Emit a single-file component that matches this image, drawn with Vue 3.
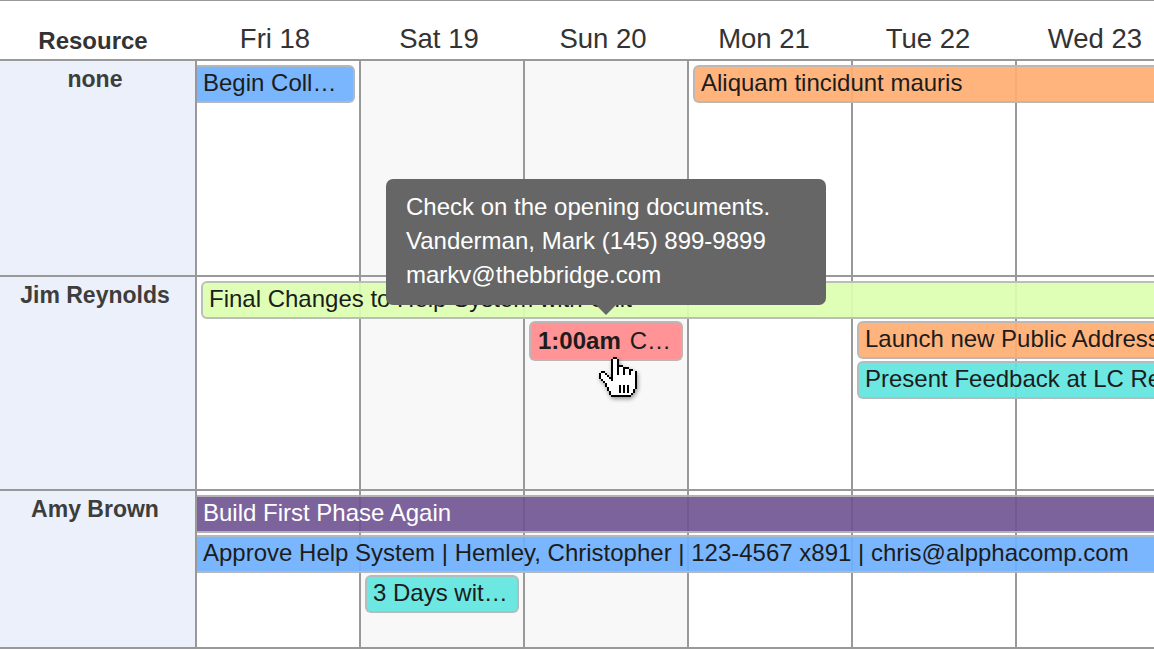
<script setup>
const days = [
  { label: 'Fri 18', shift: false },
  { label: 'Sat 19', shift: false },
  { label: 'Sun 20', shift: false },
  { label: 'Mon 21', shift: true },
  { label: 'Tue 22', shift: true },
  { label: 'Wed 23', shift: false }
]

const rows = [
  {
    name: 'none',
    cls: 'row-a',
    events: [
      { text: 'Begin Coll…', color: 'blue', col: 1, span: 1, line: 1, start: 'cut-left' },
      { text: 'Aliquam tincidunt mauris', color: 'orange', col: 4, span: 3, line: 1, start: 'cut-right' }
    ]
  },
  {
    name: 'Jim Reynolds',
    cls: 'row-b',
    events: [
      { text: 'Final Changes to Help System with Unit', color: 'green', col: 1, span: 6, line: 1, start: 'cut-right' },
      { time: '1:00am', text: 'C…', color: 'red', col: 3, span: 1, line: 2, start: '' },
      { text: 'Launch new Public Address System', color: 'orange', col: 5, span: 2, line: 2, start: 'cut-right' },
      { text: 'Present Feedback at LC Regional', color: 'teal', col: 5, span: 2, line: 3, start: 'cut-right' }
    ]
  },
  {
    name: 'Amy Brown',
    cls: 'row-c',
    events: [
      { text: 'Build First Phase Again', color: 'purple', col: 1, span: 6, line: 1, start: 'cut-left cut-right' },
      { text: 'Approve Help System | Hemley, Christopher | 123-4567 x891 | chris@alpphacomp.com', color: 'blue', col: 1, span: 6, line: 2, start: 'cut-left cut-right' },
      { text: '3 Days wit…', color: 'teal', col: 2, span: 1, line: 3, start: '' }
    ]
  }
]

const hand = [
  '       ##          ',
  '      #..#         ',
  '      #..#         ',
  '      #..#         ',
  '      #..###       ',
  '      #..#..###    ',
  '      #..#..#..##  ',
  ' ##   #..#..#..#..#',
  '#..#  #..#..#..#..#',
  '#...# #...........#',
  '#....##...........#',
  ' #....#...........#',
  '  #...............#',
  '   #..............#',
  '   #......#.#.#...#',
  '    #.....#.#.#...#',
  '    #.....#.#.#..# ',
  '     #....#.#.#..# ',
  '     #..........#  ',
  '      ##########   '
]
const handPixels = []
hand.forEach((line, y) => {
  line.split('').forEach((c, x) => {
    if (c !== ' ') handPixels.push({ x, y, fill: c === '#' ? '#000' : '#fff' })
  })
})
</script>

<template>
  <div class="scheduler">
    <div class="head">
      <div class="head-res">Resource</div>
      <div v-for="d in days" :key="d.label" class="head-day" :class="{ shift: d.shift }">{{ d.label }}</div>
    </div>

    <div v-for="r in rows" :key="r.name" class="row" :class="r.cls">
      <div class="res">{{ r.name }}</div>
      <div
        v-for="(d, i) in days"
        :key="d.label"
        class="cell"
        :class="{ weekend: i === 1 || i === 2 }"
        :style="{ gridColumn: i + 2 }"
      ></div>
      <div
        v-for="e in r.events"
        :key="e.text"
        class="event"
        :class="[e.color, e.start]"
        :style="{ gridColumn: e.col + 1 + ' / span ' + e.span, gridRow: e.line }"
      >
        <b v-if="e.time" class="time">{{ e.time }}</b>{{ e.text }}
      </div>
    </div>

    <div class="tip">
      <div>Check on the opening documents.</div>
      <div>Vanderman, Mark (145) 899-9899</div>
      <div>markv@thebbridge.com</div>
    </div>

    <svg class="hand" width="38" height="40" viewBox="0 0 19 20" shape-rendering="crispEdges">
      <rect v-for="(p, i) in handPixels" :key="i" :x="p.x" :y="p.y" width="1" height="1" :fill="p.fill" />
    </svg>
  </div>
</template>

<style scoped>
.scheduler {
  position: relative;
  width: 1154px;
  height: 649px;
  overflow: hidden;
  background: #fff;
  font-family: "Liberation Sans", Arial, sans-serif;
  color: #1c1c1c;
}

.head {
  display: grid;
  grid-template-columns: 196px repeat(6, 164px);
  height: 61px;
  box-sizing: border-box;
  border-top: 1px solid #999;
  border-bottom: 2px solid #999;
}

.head-res {
  padding-top: 27px;
  padding-right: 10px;
  text-align: center;
  font-size: 24px;
  font-weight: 700;
  color: #333;
  line-height: 26px;
}

.head-day {
  padding-top: 23px;
  padding-right: 6px;
  text-align: center;
  font-size: 27.5px;
  line-height: 30px;
  color: #333;
}

.head-day.shift {
  padding-right: 12px;
}

.row {
  display: grid;
  grid-template-columns: 195px repeat(6, 164px);
  grid-template-rows: 40px 40px 40px 1fr;
  box-sizing: border-box;
  border-bottom: 2px solid #999;
}

.row-a {
  height: 216px;
}

.row-b {
  height: 214px;
}

.row-c {
  height: 158px;
}

.res {
  grid-column: 1;
  grid-row: 1 / -1;
  background: #ebf0fa;
  text-align: center;
  font-size: 23px;
  font-weight: 700;
  line-height: 24px;
  color: #3d3d3d;
  padding: 6px 5px 0 0;
}

.cell {
  grid-row: 1 / -1;
  border-left: 2px solid #999;
}

.weekend {
  background: #f8f8f8;
}

.event {
  min-width: 0;
  box-sizing: border-box;
  height: 38px;
  margin: 4px 4px 0 6px;
  border: 2px solid rgba(185, 185, 185, 0.9);
  border-radius: 6px;
  padding-left: 6px;
  font-size: 24px;
  line-height: 31px;
  white-space: nowrap;
  overflow: hidden;
  z-index: 1;
}

.cut-left {
  margin-left: 2px;
  border-left: 0;
  border-top-left-radius: 0;
  border-bottom-left-radius: 0;
}

.cut-right {
  margin-right: -60px;
  border-right: 0;
  border-top-right-radius: 0;
  border-bottom-right-radius: 0;
}

.time {
  margin-right: 9px;
}

.blue { background: rgba(111, 176, 253, 0.92); }
.orange { background: rgba(255, 174, 115, 0.92); }
.green { background: rgba(220, 255, 176, 0.92); }
.red { background: rgba(255, 138, 141, 0.92); height: 40px; padding-left: 7px; line-height: 35px; }
.teal { background: rgba(96, 229, 222, 0.92); }
.purple { background: rgba(111, 82, 145, 0.9); color: #fff; }

.tip {
  position: absolute;
  left: 386px;
  top: 179px;
  width: 440px;
  height: 126px;
  box-sizing: border-box;
  padding: 11px 20px;
  border-radius: 7px;
  background: #666;
  color: #fff;
  font-size: 24px;
  line-height: 34px;
  z-index: 2;
}

.tip::after {
  content: "";
  position: absolute;
  left: 210px;
  top: 100%;
  border: 10px solid transparent;
  border-top-color: #666;
  border-bottom: 0;
}

.hand {
  position: absolute;
  left: 599px;
  top: 357px;
  z-index: 3;
  filter: drop-shadow(1px 2px 2px rgba(0, 0, 0, 0.4));
}
</style>
